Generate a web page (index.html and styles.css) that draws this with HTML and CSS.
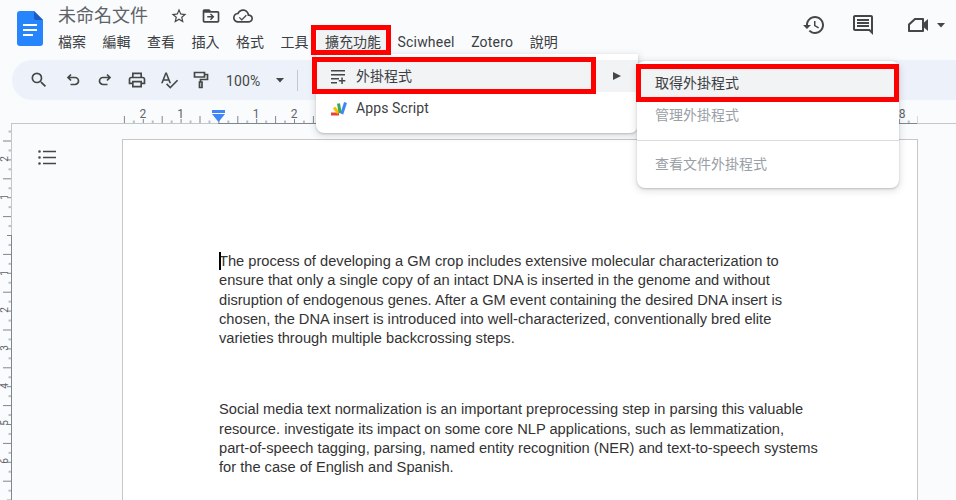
FILE: index.html
```html
<!DOCTYPE html>
<html lang="zh-Hant">
<head>
<meta charset="utf-8">
<title>未命名文件</title>
<link rel="stylesheet" href="styles.css">
</head>
<body>
<div class="app">
  <header class="titlebar">
    <svg class="logo" width="26" height="35" viewBox="0 0 26 35">
      <path class="logo-sheet" d="M3 0H17L26 9V32a3 3 0 0 1-3 3H3a3 3 0 0 1-3-3V3a3 3 0 0 1 3-3z"/>
      <path class="logo-fold" d="M17 0L26 9H19a2 2 0 0 1-2-2z"/>
      <path class="logo-lines" d="M6 13h14v2H6zM6 18h14v2H6zM6 23h10v2H6z"/>
    </svg>
    <div class="doc-head">
      <div class="title-row">
        <span class="doc-title">未命名文件</span>
        <svg class="ic ic-star" width="18" height="18" viewBox="0 0 24 24"><path d="M22 9.24l-7.19-.62L12 2 9.19 8.63 2 9.24l5.46 4.73L5.82 21 12 17.27 18.18 21l-1.63-7.03L22 9.24zM12 15.4l-3.76 2.27 1-4.28-3.32-2.88 4.38-.38L12 6.1l1.71 4.04 4.38.38-3.32 2.88 1 4.28L12 15.4z"/></svg>
        <svg class="ic ic-folder" width="20" height="20" viewBox="0 0 24 24"><path d="M20 6h-8l-2-2H4c-1.1 0-2 .9-2 2v12c0 1.1.9 2 2 2h16c1.1 0 2-.9 2-2V8c0-1.1-.9-2-2-2zm0 12H4V8h16v10z"/><path d="M12 9l-1.2 1.2 1.9 1.9H7.5v1.8h5.2l-1.9 1.9L12 17l4-4z"/></svg>
        <svg class="ic ic-cloud" width="20" height="20" viewBox="0 0 24 24"><path d="M19.35 10.04C18.67 6.59 15.64 4 12 4 9.11 4 6.6 5.64 5.35 8.04 2.34 8.36 0 10.91 0 14c0 3.31 2.69 6 6 6h13c2.76 0 5-2.24 5-5 0-2.64-2.05-4.78-4.65-4.96zM19 18H6c-2.21 0-4-1.79-4-4s1.79-4 4-4h.71C7.37 7.69 9.48 6 12 6c3.04 0 5.5 2.46 5.5 5.5v.5H19c1.66 0 3 1.34 3 3s-1.34 3-3 3z"/><path d="M10.5 15.5l-2.4-2.4-1.1 1.1 3.5 3.5 6-6-1.1-1.1z"/></svg>
      </div>
      <nav class="menubar">
        <span class="menu-item">檔案</span>
        <span class="menu-item">編輯</span>
        <span class="menu-item">查看</span>
        <span class="menu-item">插入</span>
        <span class="menu-item">格式</span>
        <span class="menu-item">工具</span>
        <span class="menu-item is-open">擴充功能</span>
        <span class="menu-item is-latin">Sciwheel</span>
        <span class="menu-item is-latin">Zotero</span>
        <span class="menu-item">說明</span>
      </nav>
    </div>
    <div class="head-actions">
      <svg class="ic" width="24" height="24" viewBox="0 0 24 24"><path d="M13 3c-4.97 0-9 4.03-9 9H1l3.89 3.89.07.14L9 12H6c0-3.87 3.13-7 7-7s7 3.13 7 7-3.13 7-7 7c-1.93 0-3.68-.79-4.94-2.06l-1.42 1.42C8.27 19.99 10.51 21 13 21c4.97 0 9-4.03 9-9s-4.03-9-9-9zm-1 5v5l4.28 2.54.72-1.21-3.5-2.08V8H12z"/></svg>
      <svg class="ic ic-comment" width="24" height="24" viewBox="0 0 24 24"><path d="M20 17.17L18.83 16H4V4h16v13.17zM20 2H4c-1.1 0-2 .9-2 2v12c0 1.1.9 2 2 2h14l4 4V4c0-1.1-.9-2-2-2z"/><path d="M6 12h12v2H6zM6 9h12v2H6zM6 6h12v2H6z"/></svg>
      <svg class="ic ic-video" width="24" height="24" viewBox="0 0 24 24"><path d="M8.6 5L2 11v7c0 .55.45 1 1 1h14c.55 0 1-.45 1-1v-3.6l4 3.6V6l-4 3.6V6c0-.55-.45-1-1-1H8.600zM9.400 7H16v10H4v-5.100z"/></svg>
      <svg class="ic ic-caret" width="12" height="12" viewBox="0 0 12 12"><path d="M2 4h8L6 8.500z"/></svg>
    </div>
  </header>

  <div class="toolbar">
    <span class="tb-btn"><svg class="ic" width="20" height="20" viewBox="0 0 24 24"><path d="M15.500 14h-.79l-.28-.27A6.471 6.471 0 0 0 16 9.500 6.500 6.500 0 1 0 9.500 16c1.610 0 3.090-.59 4.230-1.570l.27.28v.79l5 4.990L20.490 19l-4.990-5zm-6 0C7.010 14 5 11.990 5 9.500S7.010 5 9.500 5 14 7.010 14 9.500 11.990 14 9.500 14z"/></svg></span>
    <span class="tb-btn"><svg class="stroke" width="16" height="16" viewBox="0 0 16 16"><path d="M3 5.500h7a3.500 3.500 0 0 1 0 7H5.500M6 2.500l-3 3 3 3"/></svg></span>
    <span class="tb-btn"><svg class="stroke" width="16" height="16" viewBox="0 0 16 16"><path d="M13 5.500H6a3.500 3.500 0 0 0 0 7h4.500M10 2.500l3 3-3 3"/></svg></span>
    <span class="tb-btn"><svg class="ic" width="20" height="20" viewBox="0 0 24 24"><path d="M19 8h-1V3H6v5H5c-1.660 0-3 1.340-3 3v6h4v4h12v-4h4v-6c0-1.660-1.340-3-3-3zM8 5h8v3H8V5zm8 12v2H8v-4h8v2zm2-2v-2H6v2H4v-4c0-.55.45-1 1-1h14c.55 0 1 .45 1 1v4h-2z"/></svg></span>
    <span class="tb-btn"><svg class="ic" width="20" height="20" viewBox="0 0 24 24"><path d="M12.450 16h2.090L9.430 3H7.570L2.460 16h2.090l1.120-3h5.640l1.140 3zm-6.020-5L8.500 5.480 10.570 11H6.430zm15.160.59l-8.090 8.090L9.830 16l-1.410 1.410 5.090 5.090L23 13l-1.410-1.410z"/></svg></span>
    <span class="tb-btn"><svg class="stroke" width="16" height="18" viewBox="0 0 16 18"><path d="M1.500 1.500h10v4.500h-10zM11.500 3.500h3v5H7.500v2.500M6.500 11h2.500v5.500H6.500z"/></svg></span>
    <span class="zoom-val">100%</span>
    <svg class="ic zoom-caret" width="12" height="12" viewBox="0 0 12 12"><path d="M2 4h8L6 8.500z"/></svg>
    <span class="tb-sep"></span>
  </div>

  <svg class="h-ruler" width="956" height="24" viewBox="0 0 956 24">
    <defs>
      <pattern id="hticks" patternUnits="userSpaceOnUse" x="218.4" y="0" width="37.8" height="24">
        <path class="tick" d="M.5 19v4M9.950 20.500V23M19.400 16v7M28.850 20.500V23"/>
      </pattern>
    </defs>
    <rect x="123" y="0" width="795" height="23" fill="url(#hticks)"/>
    <path class="rule-light" d="M11 23.500h207M917 23.500h39"/>
    <path class="rule-dark" d="M218 23.500h699"/>
    <g class="ruler-num">
      <text x="142.800" y="18">2</text><text x="180.600" y="18">1</text>
      <text x="256.200" y="18">1</text><text x="294" y="18">2</text>
      <text x="898.800" y="18">18</text>
    </g>
    <path class="marker" d="M212 10h13v3h-13zM212 14h13l-6.500 8z"/>
  </svg>

  <div class="workspace">
    <svg class="v-ruler" width="12" height="376" viewBox="0 0 12 376">
      <defs>
        <pattern id="vticks" patternUnits="userSpaceOnUse" x="0" y="111" width="12" height="37.800">
          <path class="tick" d="M7 .5h4M8.500 9.950H11M3 19.400h8M8.500 28.850H11"/>
        </pattern>
      </defs>
      <rect x="0" y="0" width="11" height="376" fill="url(#vticks)"/>
      <path class="rule-light" d="M11.500 0V111"/>
      <path class="rule-dark" d="M11.500 111V376"/>
      <g class="ruler-num v-num">
        <text transform="translate(8 35) rotate(-90)">2</text>
        <text transform="translate(8 73) rotate(-90)">1</text>
        <text transform="translate(8 149) rotate(-90)">1</text>
        <text transform="translate(8 186) rotate(-90)">2</text>
        <text transform="translate(8 224) rotate(-90)">3</text>
        <text transform="translate(8 262) rotate(-90)">4</text>
        <text transform="translate(8 299) rotate(-90)">5</text>
        <text transform="translate(8 337) rotate(-90)">6</text>
      </g>
    </svg>
    <main class="canvas">
      <aside class="outline-rail">
        <svg class="ic" width="20" height="16" viewBox="0 0 20 16"><path d="M1.500 1.200a1.300 1.300 0 1 0 0 2.600 1.300 1.300 0 0 0 0-2.600zM1.500 7.200a1.300 1.300 0 1 0 0 2.600 1.300 1.300 0 0 0 0-2.600zM1.500 13.200a1.300 1.300 0 1 0 0 2.600 1.300 1.300 0 0 0 0-2.600zM5 1.700h13v1.600H5zM5 7.700h13v1.600H5zM5 13.700h13v1.600H5z"/></svg>
      </aside>
      <article class="page">
        <p class="para"><span class="caret"></span>The process of developing a GM crop includes extensive molecular characterization to ensure that only a single copy of an intact DNA is inserted in the genome and without disruption of endogenous genes. After a GM event containing the desired DNA insert is chosen, the DNA insert is introduced into well-characterized, conventionally bred elite varieties through multiple backcrossing steps.</p>
        <p class="para para-next">Social media text normalization is an important preprocessing step in parsing this valuable resource. investigate its impact on some core NLP applications, such as lemmatization, <span class="nowrap">part-of-speech</span> tagging, parsing, named entity recognition (NER) and text-to-speech systems for the case of English and Spanish.</p>
      </article>
    </main>
  </div>

  <div class="dropdown dd-main">
    <div class="dd-item is-hover">
      <svg class="ic dd-icon" width="20" height="20" viewBox="0 0 20 20"><path d="M2 4h14v1.500H2zM2 8h14v1.500H2zM2 12h8v1.500H2zM2 16h6v1.500H2zM12.300 11.500h1.500V14h2.500v1.500h-2.500V18h-1.500v-2.500H9.800V14h2.500z"/></svg>
      <span class="dd-cjk">外掛程式</span>
      <svg class="ic dd-arrow" width="10" height="10" viewBox="0 0 10 10"><path d="M1 1l8 4-8 4z"/></svg>
    </div>
    <div class="dd-item">
      <svg class="dd-icon" width="20" height="20" viewBox="0 0 20 20">
        <path class="as-stroke as-red" d="M2 16H10"/>
        <path class="as-stroke as-yellow" d="M5 9.500L9.500 15"/>
        <path class="as-stroke as-green" d="M9.500 5.500L11.200 15"/>
        <path class="as-stroke as-blue" d="M16.500 4.500L12.800 16"/>
      </svg>
      <span class="apps-label">Apps Script</span>
    </div>
  </div>

  <div class="dropdown dd-sub">
    <div class="dd-item is-hover">取得外掛程式</div>
    <div class="dd-item is-disabled">管理外掛程式</div>
    <div class="dd-sep"></div>
    <div class="dd-item is-disabled">查看文件外掛程式</div>
  </div>

  <div class="mark mark-menu"></div>
  <div class="mark mark-addon"></div>
  <div class="mark mark-get"></div>
</div>
</body>
</html>
```

FILE: styles.css
```css
* { box-sizing: border-box; }
html, body { margin: 0; padding: 0; }
body {
  background: #f9fbfd;
  color: #3c4043;
  font-family: "Roboto", "Noto Sans CJK TC", sans-serif;
  overflow: hidden;
}
.app { position: relative; width: 956px; height: 500px; overflow: hidden; }
.ic { fill: #444746; display: block; flex: none; }
.stroke { fill: none; stroke: #444746; stroke-width: 1.700; display: block; }
.is-latin { letter-spacing: .2px; }
.nowrap { white-space: nowrap; }

/* header */
.titlebar { display: flex; height: 60px; padding-left: 17px; }
.logo { margin-top: 11px; margin-right: 15px; flex: none; }
.logo-sheet { fill: #2684fc; }
.logo-fold { fill: #1a5cc4; }
.logo-lines { fill: #ffffff; }
.title-row { display: flex; align-items: center; height: 22px; margin: 5px 0 3px; }
.doc-title { font-size: 18px; line-height: 22px; color: #5f6368; width: 90px; }
.ic-star { margin-left: 22px; }
.ic-folder { margin-left: 13px; }
.ic-cloud { margin-left: 12px; }
.menubar { display: flex; margin-left: -8.250px; }
.menu-item { font-size: 14px; line-height: 24px; height: 24px; padding: 0 8.250px; color: #3c4043; white-space: nowrap; }
.menu-item.is-open { background: #f1f3f4; }
.head-actions { display: flex; align-items: center; margin-left: auto; height: 24px; margin-top: 13px; padding-right: 9px; }
.ic-comment { margin-left: 25px; }
.ic-video { margin-left: 31px; }
.ic-caret { margin-left: 5px; }

/* toolbar */
.toolbar { display: flex; align-items: center; height: 40px; margin-left: 12px; padding-left: 11px; background: #edf2fa; border-radius: 20px 0 0 20px; }
.tb-btn { display: flex; align-items: center; justify-content: center; width: 32px; height: 40px; }
.tb-btn:nth-child(1) { margin-right: 2px; }
.zoom-val { font-size: 14px; margin-left: 9px; width: 39px; padding-top: 2px; letter-spacing: .1px; color: #444746; }
.zoom-caret { margin-left: 9px; }
.tb-sep { width: 1px; height: 21px; background: #c7c7c7; margin-left: 11px; }

/* rulers */
.h-ruler, .v-ruler { display: block; flex: none; }
.tick { stroke: #80868b; stroke-width: 1; fill: none; }
.rule-light { stroke: #c4c7c5; stroke-width: 1; fill: none; }
.rule-dark { stroke: #80868b; stroke-width: 1; fill: none; }
.ruler-num { font-family: "Roboto", sans-serif; font-size: 12px; fill: #5f6368; text-anchor: middle; }
.v-num { font-size: 10px; }
.marker { fill: #4285f4; }

/* document area */
.workspace { display: flex; height: 376px; overflow: hidden; }
.canvas { display: flex; flex: 1; min-width: 0; padding-top: 15px; }
.outline-rail { width: 110px; flex: none; padding: 10px 0 0 26px; }
.page { width: 796px; flex: none; background: #fff; border: 1px solid #c7c7c7; padding: 112px 96px 0 96px; height: 400px; }
.para { margin: 0; font-family: "Liberation Sans", Arial, sans-serif; font-size: 14.670px; line-height: 19.300px; color: #333; position: relative; }
.para-next { margin-top: 52px; }
.caret { position: absolute; left: 0; top: 0; width: 2px; height: 18px; background: #000; }

/* menus */
.dropdown { position: absolute; background: #fff; border-radius: 0 0 8px 8px; box-shadow: 0 1px 2px rgba(60,64,67,.25), 0 2px 6px 2px rgba(60,64,67,.12); font-size: 14px; color: #3c4043; }
.dd-main { left: 316px; top: 54px; width: 322px; height: 79px; padding-top: 6px; }
.dd-sub { left: 637px; top: 61px; width: 262px; height: 127px; padding-top: 6px; border-radius: 8px; }
.dd-item { display: flex; align-items: center; height: 32px; padding-left: 18px; padding-bottom: 2px; }
.dd-main .dd-item { padding-left: 13px; padding-bottom: 0; }
.dd-cjk { padding-bottom: 2px; }
.apps-label { letter-spacing: .1px; }
.dd-item.is-hover { background: #f1f3f4; }
.dd-icon { flex: none; margin-right: 7px; }
.dd-arrow { margin-left: 200px; }
.dd-item.is-disabled { color: #9aa0a6; }
.dd-sep { height: 1px; background: #dadce0; margin: 9px 0 7px; }
.as-stroke { fill: none; stroke-width: 3; }
.as-red { stroke: #ea4335; }
.as-yellow { stroke: #fbbc04; }
.as-green { stroke: #34a853; }
.as-blue { stroke: #4285f4; }

/* red annotation frames */
.mark { position: absolute; border: 5px solid #f00; pointer-events: none; }
.mark-menu { left: 311px; top: 25px; width: 80px; height: 30px; }
.mark-addon { left: 312px; top: 57px; width: 284px; height: 37px; }
.mark-get { left: 636px; top: 64px; width: 263px; height: 38px; }
```
